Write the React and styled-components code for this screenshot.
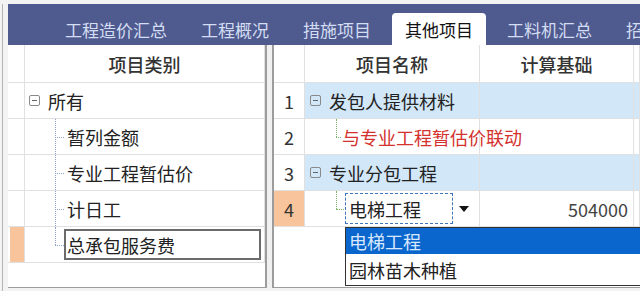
import React from 'react';
import styled, { createGlobalStyle, css } from 'styled-components';

const COLOR_BAR = '#4f5a8e';
const COLOR_TAB_TEXT = '#d3ddf3';
const COLOR_LINE = '#e0e0e0';
const COLOR_FRAME_LINE = '#9c9c9c';
const COLOR_ROW_BLUE = '#d2e7f8';
const COLOR_ORANGE = '#f8c49b';
const COLOR_SELECT = '#0a66cc';

const GlobalStyle = createGlobalStyle`
  html, body {
    margin: 0;
    padding: 0;
    background: #eeeeee;
  }
  body {
    font-family: "Noto Sans CJK SC", "Noto Sans", sans-serif;
    color: #222;
  }
`;

const Frame = styled.div`
  width: 640px;
  height: 291px;
  overflow: hidden;
  box-sizing: border-box;
  padding: 4px 0 0 2px;
  background: #f3f3f3;
`;

const Shell = styled.div`
  height: 100%;
  box-sizing: border-box;
  border-left: 1px solid #b4b4b4;
  padding-left: 5px;
  display: flex;
  flex-direction: column;
`;

const TabBar = styled.div`
  height: 41px;
  flex: none;
  background: ${COLOR_BAR};
  display: flex;
  align-items: flex-end;
  gap: 8px;
  padding-left: 44px;
  white-space: nowrap;
  overflow: hidden;
`;

const Tab = styled.div`
  height: 32px;
  padding: 0 13px;
  display: flex;
  align-items: center;
  font-size: 17px;
  color: ${COLOR_TAB_TEXT};
  border-radius: 4px 4px 0 0;
  ${props =>
    props.active &&
    css`
      background: #fff;
      color: #111;
    `}
`;

const Body = styled.div`
  flex: 1;
  display: flex;
  min-height: 0;
  margin-bottom: 3px;
`;

const LeftPanel = styled.div`
  width: 257px;
  flex: none;
  background: #fff;
  border-right: 2px solid ${COLOR_FRAME_LINE};
  border-bottom: 1px solid ${COLOR_FRAME_LINE};
`;

const Splitter = styled.div`
  width: 5px;
  flex: none;
  background: #f0f0f0;
`;

const RightPanel = styled.div`
  position: relative;
  flex: 1;
  background: #fff;
  border-left: 2px solid ${COLOR_FRAME_LINE};
  border-bottom: 1px solid ${COLOR_FRAME_LINE};
  overflow: hidden;
`;

const LeftRow = styled.div`
  display: grid;
  grid-template-columns: 17px 1fr;
  height: ${props => (props.header ? 38 : 36)}px;
  border-bottom: 1px solid ${COLOR_LINE};
  box-sizing: border-box;
`;

const RightRow = styled.div`
  display: grid;
  grid-template-columns: 31px 175px 154px 1fr;
  height: ${props => (props.header ? 38 : 36)}px;
  border-bottom: 1px solid ${COLOR_LINE};
  box-sizing: border-box;
`;

const Cell = styled.div`
  position: relative;
  display: flex;
  align-items: center;
  border-right: 1px solid ${COLOR_LINE};
  font-size: 18px;
  white-space: nowrap;
  background: ${props => (props.blue ? COLOR_ROW_BLUE : 'transparent')};
  justify-content: ${props => props.align || 'flex-start'};
  z-index: ${props => (props.spill ? 1 : 'auto')};
`;

const HeaderCell = styled(Cell)`
  justify-content: center;
  font-weight: 500;
  color: #333;
`;

const Indicator = styled(Cell)`
  background: ${props => (props.marked ? COLOR_ORANGE : 'transparent')};
  margin: ${props => (props.marked ? '0 0 0 2px' : '0')};
`;

const RowNum = styled(Cell)`
  justify-content: center;
  color: #333;
  background: ${props => (props.marked ? COLOR_ORANGE : '#fff')};
`;

const Collapse = styled.span`
  width: 9px;
  height: 9px;
  flex: none;
  border: 1px solid #8a8a8a;
  border-radius: 2px;
  position: relative;
  margin-right: 8px;

  &::after {
    content: '';
    position: absolute;
    left: 2px;
    right: 2px;
    top: 4px;
    height: 1px;
    background: #666;
  }
`;

const TreeCell = styled(Cell)`
  padding-left: ${props => props.indent}px;

  ${props =>
    props.branch &&
    css`
      &::before {
        content: '';
        position: absolute;
        left: ${props.lineX}px;
        top: 0;
        bottom: ${props.last ? '50%' : '0'};
        border-left: 1px dotted ${props.lineColor};
      }
      &::after {
        content: '';
        position: absolute;
        left: ${props.lineX}px;
        width: ${props.tick}px;
        top: 50%;
        border-top: 1px dotted ${props.lineColor};
      }
    `}
`;

const EditBox = styled.div`
  width: 197px;
  height: 31px;
  box-sizing: border-box;
  border: 2px solid #6b6b6b;
  display: flex;
  align-items: center;
  padding-left: 1px;
  color: #222;
`;

const RedText = styled.span`
  color: #d4322e;
`;

const Combo = styled.div`
  width: 108px;
  height: 31px;
  box-sizing: border-box;
  border: 1px dashed #3f74b8;
  display: flex;
  align-items: center;
  padding-left: 3px;
`;

const ComboArrow = styled.span`
  width: 0;
  height: 0;
  margin-left: 6px;
  border-left: 5px solid transparent;
  border-right: 5px solid transparent;
  border-top: 6px solid #111;
`;

const Amount = styled.span`
  color: #444;
  padding-right: 5px;
`;

const DropList = styled.div`
  position: absolute;
  z-index: 2;
  left: 71px;
  top: 182px;
  width: 300px;
  box-sizing: border-box;
  border: 1px solid #333;
  background: #fff;
`;

const DropItem = styled.div`
  height: ${props => (props.selected ? 26 : 31)}px;
  display: flex;
  align-items: center;
  padding-left: 3px;
  font-size: 18px;
  color: ${props => (props.selected ? '#d8e8ff' : '#222')};
  background: ${props => (props.selected ? COLOR_SELECT : '#fff')};
`;

const tabs = ['工程造价汇总', '工程概况', '措施项目', '其他项目', '工料机汇总', '招标'];
const categories = ['暂列金额', '专业工程暂估价', '计日工'];

export default function App() {
  return (
    <>
      <GlobalStyle />
      <Frame>
        <Shell>
          <TabBar>
            {tabs.map(t => (
              <Tab key={t} active={t === '其他项目'}>
                {t}
              </Tab>
            ))}
          </TabBar>
          <Body>
            <LeftPanel>
              <LeftRow header>
                <Indicator />
                <HeaderCell>项目类别</HeaderCell>
              </LeftRow>
              <LeftRow>
                <Indicator />
                <TreeCell indent={4}>
                  <Collapse />
                  所有
                </TreeCell>
              </LeftRow>
              {categories.map(c => (
                <LeftRow key={c}>
                  <Indicator />
                  <TreeCell indent={42} branch lineX={30} tick={9} lineColor="#8ea2c6">
                    {c}
                  </TreeCell>
                </LeftRow>
              ))}
              <LeftRow>
                <Indicator marked />
                <TreeCell indent={39} branch last lineX={30} tick={9} lineColor="#8ea2c6">
                  <EditBox>总承包服务费</EditBox>
                </TreeCell>
              </LeftRow>
            </LeftPanel>
            <Splitter />
            <RightPanel>
              <RightRow header>
                <RowNum />
                <HeaderCell>项目名称</HeaderCell>
                <HeaderCell>计算基础</HeaderCell>
                <Cell />
              </RightRow>
              <RightRow>
                <RowNum>1</RowNum>
                <TreeCell blue indent={5}>
                  <Collapse />
                  发包人提供材料
                </TreeCell>
                <Cell blue />
                <Cell blue />
              </RightRow>
              <RightRow>
                <RowNum>2</RowNum>
                <TreeCell spill indent={37} branch last lineX={31} tick={5} lineColor="#7fb36a">
                  <RedText>与专业工程暂估价联动</RedText>
                </TreeCell>
                <Cell />
                <Cell />
              </RightRow>
              <RightRow>
                <RowNum>3</RowNum>
                <TreeCell blue indent={5}>
                  <Collapse />
                  专业分包工程
                </TreeCell>
                <Cell blue />
                <Cell blue />
              </RightRow>
              <RightRow>
                <RowNum marked>4</RowNum>
                <TreeCell indent={40} branch last lineX={31} tick={8} lineColor="#7fb36a">
                  <Combo>电梯工程</Combo>
                  <ComboArrow />
                </TreeCell>
                <Cell align="flex-end">
                  <Amount>504000</Amount>
                </Cell>
                <Cell />
              </RightRow>
              <DropList>
                <DropItem selected>电梯工程</DropItem>
                <DropItem>园林苗木种植</DropItem>
              </DropList>
            </RightPanel>
          </Body>
        </Shell>
      </Frame>
    </>
  );
}
